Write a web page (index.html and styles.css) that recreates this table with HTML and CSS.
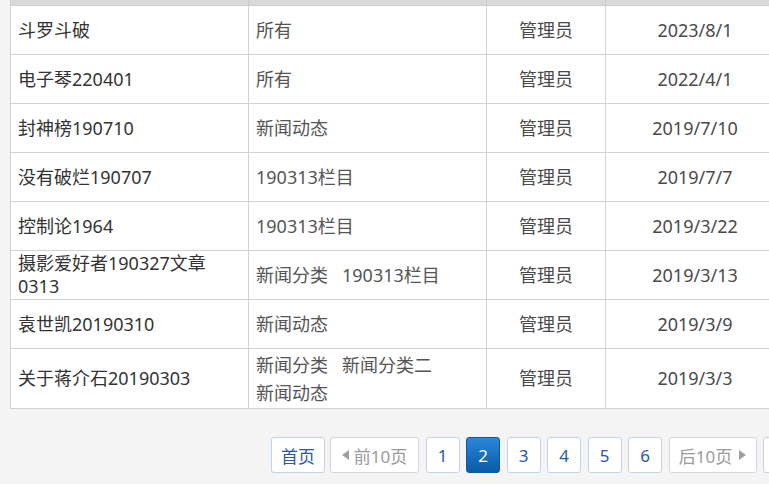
FILE: index.html
```html
<!DOCTYPE html>
<html lang="zh-CN">
<head>
<meta charset="utf-8">
<link rel="stylesheet" href="styles.css">
</head>
<body>
<div class="page">
  <table class="list">
    <colgroup>
      <col class="c1"><col class="c2"><col class="c3"><col class="c4">
    </colgroup>
    <thead>
      <tr class="head"><th></th><th></th><th></th><th></th></tr>
    </thead>
    <tbody>
      <tr><td class="title">斗罗斗破</td><td class="cat"><span class="tag">所有</span></td><td class="center">管理员</td><td class="center">2023/8/1</td></tr>
      <tr><td class="title">电子琴220401</td><td class="cat"><span class="tag">所有</span></td><td class="center">管理员</td><td class="center">2022/4/1</td></tr>
      <tr><td class="title">封神榜190710</td><td class="cat"><span class="tag">新闻动态</span></td><td class="center">管理员</td><td class="center">2019/7/10</td></tr>
      <tr><td class="title">没有破烂190707</td><td class="cat"><span class="tag">190313栏目</span></td><td class="center">管理员</td><td class="center">2019/7/7</td></tr>
      <tr><td class="title">控制论1964</td><td class="cat"><span class="tag">190313栏目</span></td><td class="center">管理员</td><td class="center">2019/3/22</td></tr>
      <tr><td class="title">摄影爱好者190327文章0313</td><td class="cat"><span class="tag">新闻分类</span><span class="tag">190313栏目</span></td><td class="center">管理员</td><td class="center">2019/3/13</td></tr>
      <tr><td class="title">袁世凯20190310</td><td class="cat"><span class="tag">新闻动态</span></td><td class="center">管理员</td><td class="center">2019/3/9</td></tr>
      <tr class="tall"><td class="title">关于蒋介石20190303</td><td class="cat"><span class="tag">新闻分类</span><span class="tag">新闻分类二</span><span class="tag">新闻动态</span></td><td class="center">管理员</td><td class="center">2019/3/3</td></tr>
    </tbody>
  </table>
  <div class="pager">
    <a class="btn wide-first">首页</a>
    <a class="btn disabled w89"><span class="tri-left"></span>前10页</a>
    <a class="btn num">1</a>
    <a class="btn num active">2</a>
    <a class="btn num">3</a>
    <a class="btn num">4</a>
    <a class="btn num">5</a>
    <a class="btn num">6</a>
    <a class="btn disabled w88">后10页<span class="tri-right"></span></a>
    <a class="btn">尾页</a>
  </div>
</div>
</body>
</html>
```

FILE: styles.css
```css
html, body {
  margin: 0;
  padding: 0;
  width: 769px;
  height: 484px;
  overflow: hidden;
  background: #f4f4f4;
  font-family: "Noto Sans", "Noto Sans CJK SC", sans-serif;
}
.page {
  width: 800px;
  background: #f4f4f4;
}
.list {
  margin-left: 10px;
  border-collapse: collapse;
  table-layout: fixed;
  width: 774px;
  background: #fff;
  font-size: 18px;
}
.c1 { width: 238px; }
.c2 { width: 238px; }
.c3 { width: 119px; }
.c4 { width: 179px; }
.list th, .list td {
  border: 1px solid #d2d2d2;
  padding: 0;
}
.head th {
  height: 5px;
  background: #d9d9d9;
  border-top: none;
  border-color: #cfcfcf;
}
.list td {
  height: 48px;
  color: #555;
  line-height: 23px;
  vertical-align: middle;
}
.list tr.tall td { height: 59px; }
.list td.title {
  color: #333;
  padding: 0 30px 0 7px;
}
.list td.cat {
  padding: 0 8px 0 7px;
}
.tag {
  display: inline-block;
  white-space: nowrap;
  margin-right: 14px;
  line-height: 28px;
}
.list td.center {
  text-align: center;
  color: #4a4a4a;
}
.pager {
  display: flex;
  gap: 6.5px;
  padding: 28px 0 0 271px;
  height: 48px;
}
.btn {
  box-sizing: border-box;
  height: 36px;
  min-width: 34px;
  padding: 0 9px;
  display: flex;
  align-items: center;
  justify-content: center;
  border: 1px solid #bfd3ea;
  border-radius: 3px;
  background: #fff;
  color: #2a58a6;
  font-size: 17px;
  flex: none;
  white-space: nowrap;
}
.wide-first { width: 54px; margin-right: -1.5px; }
.btn.num { width: 34px; padding: 0; }
.btn.disabled {
  color: #9a9a9a;
  border-color: #d6d6d6;
}
.w89 { width: 89px; }
.w88 { width: 88px; }
.btn.active {
  background: linear-gradient(#2b86d9, #0b5aa6);
  border-color: #0b5aa6;
  color: #fff;
}
.tri-left, .tri-right {
  display: inline-block;
  width: 0;
  height: 0;
  border-top: 5px solid transparent;
  border-bottom: 5px solid transparent;
}
.tri-left {
  border-right: 7px solid #a0a0a0;
  margin-right: 5px;
}
.tri-right {
  border-left: 7px solid #a0a0a0;
  margin-left: 7px;
}
```
